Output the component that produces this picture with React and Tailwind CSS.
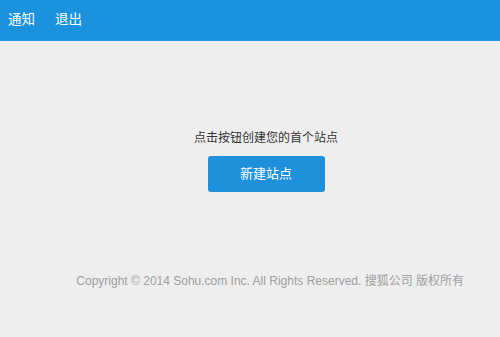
export default function App() {
  return (
    <div
      className="w-[500px] h-[337px] bg-[#eeeeee] overflow-hidden"
      style={{ fontFamily: '"Liberation Sans", "Noto Sans CJK SC", sans-serif' }}
    >
      {/* Header */}
      <div className="h-[41px] bg-[#1a92de] border-b border-[#2a9ae0] flex items-center pl-[8px] text-white text-[13.5px]">
        <span>通知</span>
        <span className="ml-[20px]">退出</span>
      </div>

      {/* Empty state */}
      <div className="flex flex-col items-center pl-[32px] pt-[88px]">
        <p className="text-[12px] leading-[18px] text-[#333333]">点击按钮创建您的首个站点</p>
        <button className="mt-[9px] w-[117px] h-[36px] rounded-[3px] bg-[#1e90dc] text-white text-[13px]">
          新建站点
        </button>
      </div>

      {/* Footer */}
      <p className="mt-[80px] pr-[36px] text-right text-[12px] leading-[18px] text-[#a0a0a0]">
        Copyright © 2014 Sohu.com Inc. All Rights Reserved. 搜狐公司 版权所有
      </p>
    </div>
  );
}
